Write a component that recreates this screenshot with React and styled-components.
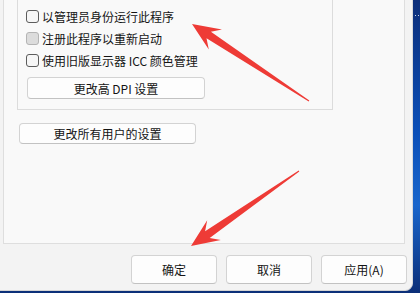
import styled, { createGlobalStyle } from "styled-components"

const Global = createGlobalStyle`
    html, body {
        margin: 0;
        padding: 0;
    }
    body {
        width: 420px;
        height: 293px;
        overflow: hidden;
        background: linear-gradient(180deg, #0d2f7a 0%, #0b4fb8 45%, #1a66cc 70%, #0c2f78 100%);
        font-family: "Noto Sans CJK SC", "Noto Sans", sans-serif;
    }
`;

const Stage = styled.div`
    position: relative;
    width: 420px;
    height: 293px;
`;

const Window = styled.div`
    width: 413px;
    height: 291px;
    box-sizing: border-box;
    background: #f3f3f3;
    border-right: 1px solid #dadada;
    border-bottom: 1px solid #d4d4d4;
    border-bottom-right-radius: 8px;
    display: flex;
    flex-direction: column;
`;

const Panel = styled.div`
    margin-left: 3px;
    width: 402px;
    height: 244px;
    box-sizing: border-box;
    background: #f9f9f9;
    border: 1px solid #dedede;
    border-top: none;
    padding-left: 13px;
    display: flex;
    flex-direction: column;
    align-items: flex-start;
`;

const Group = styled.div`
    width: 316px;
    height: 110px;
    box-sizing: border-box;
    border: 1px solid #dcdcdc;
    border-top: none;
    padding: 5px 0 0 8px;
    display: flex;
    flex-direction: column;
    align-items: flex-start;
`;

const Row = styled.label`
    display: flex;
    align-items: center;
    height: 22px;
    gap: 3px;
    font-size: 12px;
    color: #141414;
    white-space: nowrap;
`;

const Box = styled.span`
    width: 13px;
    height: 13px;
    box-sizing: border-box;
    border-radius: 3px;
    border: 1px solid ${p => (p.$disabled ? "#b4b4b4" : "#5c5c5c")};
    background: ${p => (p.$disabled ? "#dcdcdc" : "#f6f6f6")};
`;

const Button = styled.div`
    box-sizing: border-box;
    width: ${p => p.$w}px;
    height: ${p => p.$h}px;
    margin: ${p => p.$m || "0"};
    background: #fdfdfd;
    border: 1px solid #d3d3d3;
    border-bottom-color: #c2c2c2;
    border-radius: 4px;
    display: flex;
    align-items: center;
    justify-content: center;
    font-size: 12px;
    color: #141414;
    white-space: nowrap;
`;

const Footer = styled.div`
    flex: 1;
    display: flex;
    justify-content: flex-end;
    align-items: flex-start;
    gap: 9px;
    padding: 11px 5px 0 0;
`;

const Overlay = styled.svg`
    position: absolute;
    left: 0;
    top: 0;
    pointer-events: none;
`;

const options = [
    { label: "以管理员身份运行此程序" },
    { label: "注册此程序以重新启动", disabled: true },
    { label: "使用旧版显示器 ICC 颜色管理" },
];

function arrowPoints(tx, ty, px, py) {
    const len = Math.hypot(px - tx, py - ty);
    const dx = (px - tx) / len;
    const dy = (py - ty) / len;
    const nx = -dy;
    const ny = dx;
    const at = (d, w) => `${(tx + dx * d + nx * w).toFixed(1)},${(ty + dy * d + ny * w).toFixed(1)}`;
    const head = 27;
    const base = len - head;
    return [
        at(0, 0.6),
        at(base + 7, 4),
        at(base - 1, 12),
        at(len, 0),
        at(base - 1, -12),
        at(base + 7, -4),
        at(0, -0.6),
    ].join(" ");
}

export default function App() {
    return (
        <Stage>
            <Global />
            <Window>
                <Panel>
                    <Group>
                        {options.map((o, key) => (
                            <Row key={`opt-${key}`}>
                                <Box $disabled={o.disabled} />
                                {o.label}
                            </Row>
                        ))}
                        <Button $w={178} $h={22} $m="6px 0 0 1px">更改高 DPI 设置</Button>
                    </Group>
                    <Button $w={177} $h={21} $m="13px 0 0 2px">更改所有用户的设置</Button>
                </Panel>
                <Footer>
                    <Button $w={86} $h={29}>确定</Button>
                    <Button $w={86} $h={29}>取消</Button>
                    <Button $w={86} $h={29}>应用(A)</Button>
                </Footer>
            </Window>
            <Overlay width="420" height="293" viewBox="0 0 420 293">
                <g fill="#ee3b36">
                    <polygon points={arrowPoints(309, 101, 192, 24)} />
                    <polygon points={arrowPoints(299, 171, 191, 246)} />
                </g>
                <g fill="#ffffff" opacity="0.8">
                    <rect x="415" y="15" width="1" height="1" />
                    <rect x="418" y="15" width="1" height="1" />
                </g>
            </Overlay>
        </Stage>
    )
}
